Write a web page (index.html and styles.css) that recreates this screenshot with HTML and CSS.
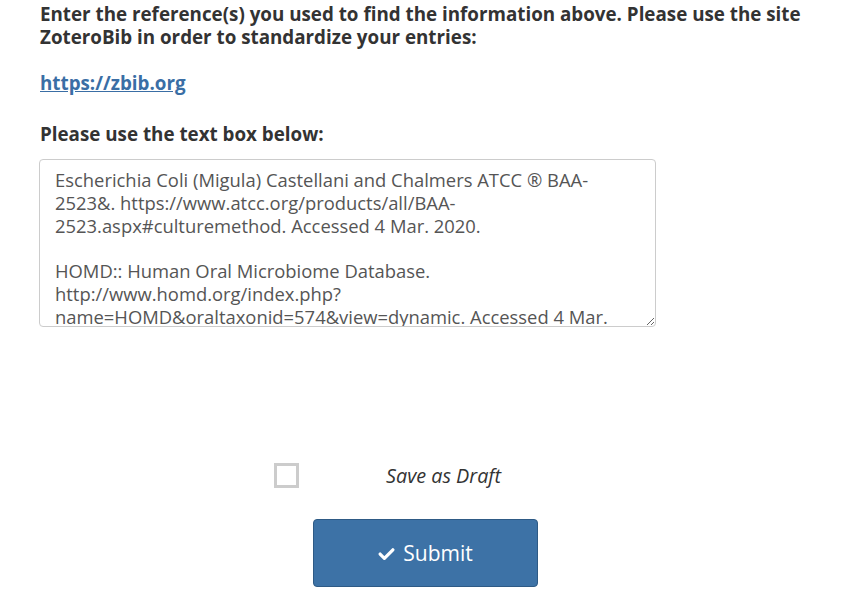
FILE: index.html
```html
<!DOCTYPE html>
<html>
<head>
<meta charset="utf-8">
<link rel="stylesheet" href="styles.css">
</head>
<body>
<div class="page">
  <p class="label">Enter the reference(s) you used to find the information above. Please use the site ZoteroBib in order to standardize your entries:</p>
  <p class="label"><a class="link" href="#">https://zbib.org</a></p>
  <p class="label sub">Please use the text box below:</p>
  <textarea class="refs">Escherichia Coli (Migula) Castellani and Chalmers ATCC ® BAA-2523&amp;. https://www.atcc.org/products/all/BAA-2523.aspx#culturemethod. Accessed 4 Mar. 2020.

HOMD:: Human Oral Microbiome Database. http://www.homd.org/index.php?name=HOMD&amp;oraltaxonid=574&amp;view=dynamic. Accessed 4 Mar. 2020.</textarea>
  <div class="draft-row">
    <span class="checkbox"></span>
    <span class="draft-label">Save as Draft</span>
  </div>
  <div class="submit-row">
    <button class="submit"><svg class="check" viewBox="0 0 16 16" width="16" height="16"><path d="M2 8.5 L6 12.5 L14 4.5" fill="none" stroke="#fff" stroke-width="3" stroke-linecap="round" stroke-linejoin="round"/></svg>Submit</button>
  </div>
</div>
</body>
</html>
```
FILE: styles.css
```css
html, body {
  margin: 0;
  padding: 0;
  background: #fff;
}
body {
  font-family: "Open Sans", "DejaVu Sans", sans-serif;
  color: #333;
}
.page {
  padding: 3px 0 0 40px;
}
.label {
  margin: 0;
  font-size: 18.8px;
  font-weight: 700;
  line-height: 23px;
  width: 790px;
}
.label + .label {
  margin-top: 23px;
}
.label.sub {
  margin-top: 28px;
}
.link {
  color: #3a6ea5;
  text-decoration: underline;
}
.refs {
  display: block;
  box-sizing: border-box;
  margin: 13px 0 0 -1px;
  width: 617px;
  height: 168px;
  padding: 9px 15px 2px;
  border: 1px solid #ccc;
  border-radius: 4px;
  font-family: "Open Sans", "DejaVu Sans", sans-serif;
  font-size: 18.4px;
  line-height: 22.8px;
  color: #555;
  resize: vertical;
  overflow: hidden;
}
.draft-row {
  display: flex;
  align-items: center;
  margin: 136px 0 0 234px;
  height: 25px;
}
.checkbox {
  box-sizing: border-box;
  width: 25px;
  height: 25px;
  border: 3px solid #ccc;
  background: #fff;
}
.draft-label {
  margin-left: 87px;
  font-size: 19.8px;
  font-style: italic;
  color: #333;
}
.submit-row {
  margin: 31px 0 0 273px;
}
.submit {
  display: flex;
  align-items: center;
  justify-content: center;
  gap: 8px;
  width: 225px;
  height: 68px;
  background: #3d72a6;
  border: 1px solid #2e5a85;
  border-radius: 4px;
  color: #fff;
  font-family: "Open Sans", "DejaVu Sans", sans-serif;
  font-size: 21px;
  font-weight: 500;
}
.check {
  width: 17px;
  height: 17px;
}
```
